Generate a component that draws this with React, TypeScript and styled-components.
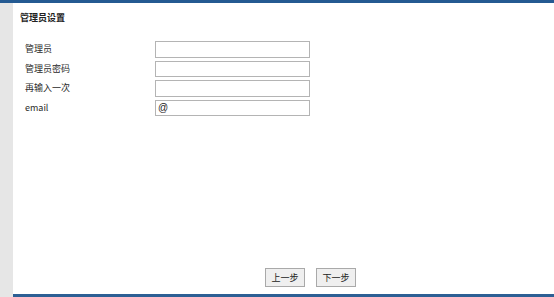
import React from "react";
import styled, { createGlobalStyle } from "styled-components";

const GlobalStyle = createGlobalStyle`
  html, body {
    margin: 0;
    padding: 0;
    background: #ffffff;
    font-family: "Noto Sans CJK SC", "Liberation Sans", sans-serif;
  }
`;

const Page = styled.div`
  width: 554px;
  height: 297px;
  display: flex;
  flex-direction: column;
  border-top: 3px solid #245a92;
  box-sizing: border-box;
  overflow: hidden;
`;

const Body = styled.div`
  flex: 1;
  display: flex;
  min-height: 0;
`;

const Sidebar = styled.div`
  width: 13px;
  background: #e6e6e6;
  flex-shrink: 0;
`;

const Main = styled.div`
  flex: 1;
  display: flex;
  flex-direction: column;
  border-bottom: 3px solid #2d5f94;
  padding-left: 7px;
`;

const Title = styled.h1`
  margin: 8px 0 0;
  font-size: 9px;
  line-height: 14px;
  font-weight: 700;
  color: #222;
`;

const Form = styled.div`
  display: grid;
  grid-template-columns: 130px 155px;
  row-gap: 3px;
  margin: 16px 0 0 5px;
`;

const Label = styled.label`
  font-size: 9px;
  line-height: 16px;
  color: #2a2a2a;
  align-self: center;
`;

const Input = styled.input`
  box-sizing: border-box;
  width: 155px;
  height: 16.5px;
  margin: 0;
  padding: 0 2px;
  border: 1px solid #b4b4b4;
  font-size: 10px;
  font-family: "Liberation Sans", sans-serif;
  color: #222;
  outline: none;
`;

const Footer = styled.div`
  margin-top: auto;
  display: flex;
  justify-content: center;
  gap: 11px;
  padding: 0 0 7px 47px;
`;

const Button = styled.button`
  box-sizing: border-box;
  height: 19px;
  width: 40px;
  padding: 0;
  border: 1px solid #a9a9a9;
  background: #efefef;
  font-size: 9px;
  font-family: "Noto Sans CJK SC", sans-serif;
  color: #222;
`;

const fields = [
  { label: "管理员", value: "" },
  { label: "管理员密码", value: "" },
  { label: "再输入一次", value: "" },
  { label: "email", value: "@" },
];

export default function App() {
  return (
    <>
      <GlobalStyle />
      <Page>
        <Body>
          <Sidebar />
          <Main>
            <Title>管理员设置</Title>
            <Form>
              {fields.map((f) => (
                <React.Fragment key={f.label}>
                  <Label>{f.label}</Label>
                  <Input defaultValue={f.value} />
                </React.Fragment>
              ))}
            </Form>
            <Footer>
              <Button>上一步</Button>
              <Button>下一步</Button>
            </Footer>
          </Main>
        </Body>
      </Page>
    </>
  );
}
